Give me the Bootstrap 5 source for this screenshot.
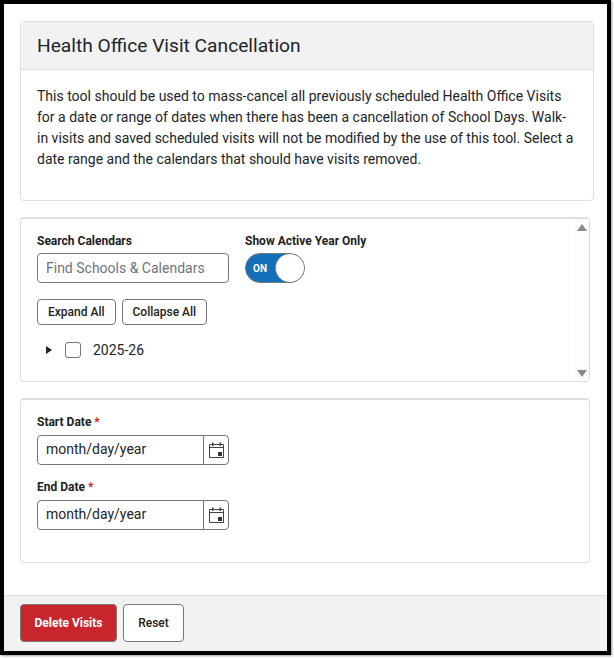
<!DOCTYPE html>
<html lang="en">
<head>
<meta charset="utf-8">
<title>Health Office Visit Cancellation</title>
<link href="https://cdn.jsdelivr.net/npm/bootstrap@5.3.0/dist/css/bootstrap.min.css" rel="stylesheet">
<style>
html, body { background: #fff; margin: 0; overflow: hidden; }
body { font-family: Roboto, "Liberation Sans", sans-serif; color: #212529; width: 614px; height: 659px; }
.app-frame { width: 611px; height: 655px; border: 4px solid #000; box-shadow: 1px 1px 2px #999; background: #fff; }
.app-main { padding: 17px 13px 0 16px; }
.info-card { border-color: #dedede; border-radius: 4px; height: 180px; }
.info-head { height: 48px; background: #f2f2f2; border-bottom: 1px solid #dedede; padding: 0 16px; }
.info-head h1 { font-size: 19.2px; font-weight: 400; margin: 0; line-height: 48px; }
.info-body { padding: 16px; font-size: 14px; line-height: 21px; }
.info-body p { margin: 0; }
.tool-panel { border: 1px solid #dedede; border-top-width: 2px; border-radius: 4px; margin-right: 4px; }
.search-panel { height: 165px; margin-top: 16px; padding: 15px 16px; }
.date-panel { height: 165px; margin-top: 16px; padding: 15px 16px; }
.scroll-rail { width: 15px; right: 0; top: 0; bottom: 0; background: #fdfdfd; }
.arrow-up, .arrow-down { width: 0; height: 0; border-left: 5px solid transparent; border-right: 5px solid transparent; left: 3px; }
.arrow-up { top: 5px; border-bottom: 7px solid #8a8a8a; }
.arrow-down { bottom: 4px; border-top: 7px solid #8a8a8a; }
.field-label { font-size: 12px; font-weight: 700; line-height: 14px; margin-bottom: 5px; display: block; color: #222; }
.date-panel .field-label { margin-bottom: 6px; }
.req-mark { color: #c9252d; }
.search-input { width: 192px; height: 30px; border: 1px solid #777; border-radius: 4px; font-size: 14px; padding: 0 8px; font-family: inherit; }
.search-input::placeholder { color: #6c757d; opacity: 1; }
.search-field { width: 208px; }
.toggle-pill { width: 60px; height: 30px; border-radius: 15px; background: #1170b9; border: 1px solid #777; color: #fff; font-size: 10px; font-weight: 700; padding-left: 7px; }
.toggle-knob { width: 29px; height: 28px; border-radius: 50%; background: #fff; border-left: 1px solid #888; right: 0; top: 0; }
.plain-btn { height: 26px; font-size: 12px; font-weight: 500; line-height: 24px; padding: 0 10px; border: 1px solid #777; border-radius: 4px; background: #fff; color: #222; }
.btn-row { margin-top: 16px; gap: 6px; }
.tree-row { margin-top: 13px; padding-left: 9px; font-size: 14px; line-height: 24px; }
.tree-caret { width: 0; height: 0; border-top: 4px solid transparent; border-bottom: 4px solid transparent; border-left: 6px solid #222; margin-right: 13px; }
.tree-check { width: 16px; height: 16px; border: 1px solid #777; border-radius: 3px; margin-right: 12px; }
.date-group { width: 192px; height: 30px; border: 1px solid #777; border-radius: 4px; margin-bottom: 15px; }
.date-text { font-size: 14px; padding-left: 8px; line-height: 26px; border-right: 1px solid #777; color: #212529; }
.date-icon { width: 24px; }
.app-foot { height: 56px; background: #f2f2f2; border-top: 1px solid #dedede; padding: 8px 16px 0; gap: 6px; margin-top: 32px; }
.foot-btn { height: 38px; font-size: 12px; font-weight: 700; border-radius: 4px; padding: 0; line-height: 34px; }
.foot-delete { width: 97px; background: #c9252d; border: 1px solid #777; color: #fff; }
.foot-reset { width: 61px; background: #fff; border: 1px solid #777; color: #222; font-weight: 500; }
</style>
</head>
<body>
<div class="app-frame d-flex flex-column">
  <div class="app-main">
    <section class="card info-card">
      <div class="info-head"><h1>Health Office Visit Cancellation</h1></div>
      <div class="info-body"><p>This tool should be used to mass-cancel all previously scheduled Health Office Visits for a date or range of dates when there has been a cancellation of School Days. Walk-in visits and saved scheduled visits will not be modified by the use of this tool. Select a date range and the calendars that should have visits removed.</p></div>
    </section>
    <section class="tool-panel search-panel position-relative">
      <div class="scroll-rail position-absolute"><div class="arrow-up position-absolute"></div><div class="arrow-down position-absolute"></div></div>
      <div class="d-flex">
        <div class="search-field">
          <label class="field-label" for="cal-search">Search Calendars</label>
          <input id="cal-search" class="search-input" type="text" placeholder="Find Schools &amp; Calendars">
        </div>
        <div>
          <span class="field-label">Show Active Year Only</span>
          <div class="toggle-pill position-relative d-flex align-items-center">ON<span class="toggle-knob position-absolute"></span></div>
        </div>
      </div>
      <div class="d-flex btn-row">
        <button class="plain-btn" type="button">Expand All</button>
        <button class="plain-btn" type="button">Collapse All</button>
      </div>
      <div class="d-flex align-items-center tree-row">
        <span class="tree-caret"></span><span class="tree-check"></span><span>2025-26</span>
      </div>
    </section>
    <section class="tool-panel date-panel">
      <span class="field-label">Start Date <span class="req-mark">*</span></span>
      <div class="date-group d-flex">
        <div class="date-text flex-grow-1">month/day/year</div>
        <div class="date-icon d-flex align-items-center justify-content-center">
          <svg width="15" height="16" viewBox="0 0 15 16"><path d="M.5 2.500h14v13H.5z" fill="none" stroke="#444"/><path d="M1 5h13v1H1z" fill="#444"/><path d="M3 .5h1.500V4H3zM10.500 .5H12V4h-1.500z" fill="#444"/><path d="M9 10h4v4H9z" fill="#333"/></svg>
        </div>
      </div>
      <span class="field-label">End Date <span class="req-mark">*</span></span>
      <div class="date-group d-flex">
        <div class="date-text flex-grow-1">month/day/year</div>
        <div class="date-icon d-flex align-items-center justify-content-center">
          <svg width="15" height="16" viewBox="0 0 15 16"><path d="M.5 2.500h14v13H.5z" fill="none" stroke="#444"/><path d="M1 5h13v1H1z" fill="#444"/><path d="M3 .5h1.500V4H3zM10.500 .5H12V4h-1.500z" fill="#444"/><path d="M9 10h4v4H9z" fill="#333"/></svg>
        </div>
      </div>
    </section>
  </div>
  <footer class="app-foot d-flex">
    <button class="foot-btn foot-delete" type="button">Delete Visits</button>
    <button class="foot-btn foot-reset" type="button">Reset</button>
  </footer>
</div>
<script src="https://cdn.jsdelivr.net/npm/bootstrap@5.3.0/dist/js/bootstrap.bundle.min.js"></script>
</body>
</html>
